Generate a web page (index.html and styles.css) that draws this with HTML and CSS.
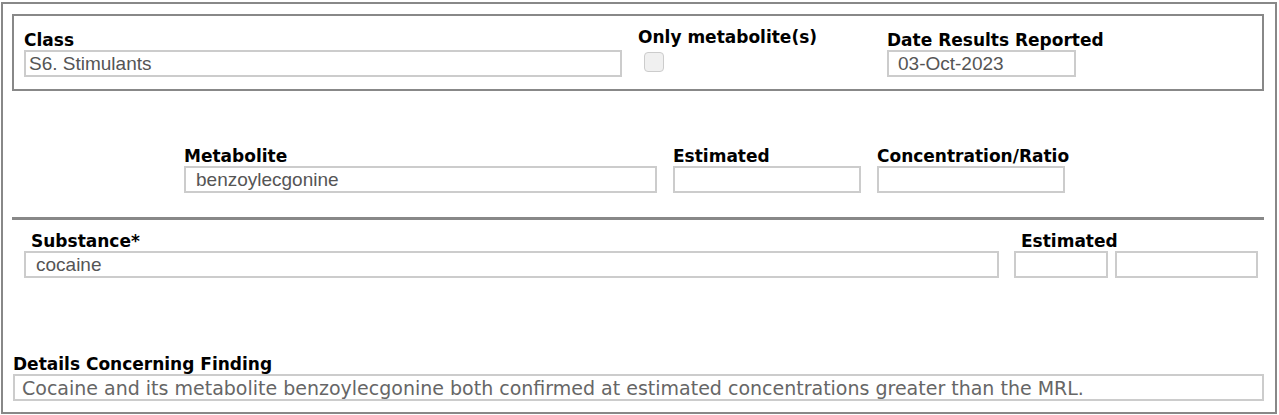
FILE: index.html
```html
<!DOCTYPE html>
<html lang="en">
  <head>
    <meta charset="UTF-8" />
    <meta name="viewport" content="width=device-width, initial-scale=1.0" />
    <title>Finding</title>
    <link rel="stylesheet" href="styles.css">
  </head>
  <body>
    <div class="panel">
      <div class="summary">
        <div class="field class-field">
          <label>Class</label>
          <input class="box" type="text" value="S6. Stimulants" readonly />
        </div>
        <div class="field only-field">
          <label>Only metabolite(s)</label>
          <span class="check"></span>
        </div>
        <div class="field date-field">
          <label>Date Results Reported</label>
          <input class="box date-pad" type="text" value="03-Oct-2023" readonly />
        </div>
      </div>

      <div class="row metabolite-row">
        <div class="field metabolite-field">
          <label>Metabolite</label>
          <input class="box wide-pad" type="text" value="benzoylecgonine" readonly />
        </div>
        <div class="field small-field">
          <label>Estimated</label>
          <input class="box" type="text" value="" readonly />
        </div>
        <div class="field small-field">
          <label>Concentration/Ratio</label>
          <input class="box" type="text" value="" readonly />
        </div>
      </div>

      <hr class="divider" />

      <div class="row substance-row">
        <div class="field substance-field">
          <label class="indent">Substance*</label>
          <input class="box wide-pad" type="text" value="cocaine" readonly />
        </div>
        <div class="field estimated-field">
          <label class="indent">Estimated</label>
          <div class="pair">
            <input class="box est-a" type="text" value="" readonly />
            <input class="box est-b" type="text" value="" readonly />
          </div>
        </div>
      </div>

      <div class="field details-field">
        <label>Details Concerning Finding</label>
        <input class="box details" type="text" value="Cocaine and its metabolite benzoylecgonine both confirmed at estimated concentrations greater than the MRL." readonly />
      </div>
    </div>
  </body>
</html>
```

FILE: styles.css
```css
* {
  box-sizing: border-box;
}

body {
  margin: 0;
  background: #fff;
  font-family: 'DejaVu Sans', Verdana, sans-serif;
}

.panel {
  margin: 2px 2px 0 1px;
  height: 412px;
  border: 2px solid #888;
}

.field {
  display: flex;
  flex-direction: column;
}

.field label {
  font-size: 17px;
  font-weight: bold;
  line-height: 18px;
  color: #000;
  margin-bottom: 1px;
  white-space: nowrap;
}

.box {
  height: 27px;
  border: 2px solid #ccc;
  padding: 0 0 0 3px;
  margin: 0;
  font-family: 'Liberation Sans', Arial, sans-serif;
  font-size: 19px;
  color: #555;
  background: #fff;
  outline: none;
}

.summary {
  display: flex;
  margin: 10px 0 0 9px;
  width: 1252px;
  height: 77px;
  border: 2px solid #888;
  padding: 15px 0 0 10px;
}

.class-field {
  width: 598px;
}

.only-field {
  margin-left: 16px;
  margin-top: -3px;
  width: 249px;
}

.only-field .check {
  display: block;
  width: 20px;
  height: 20px;
  margin: 5px 0 0 6px;
  border: 1px solid #ccc;
  border-radius: 4px;
  background: #f0f0f0;
}

.date-field {
  width: 189px;
}

.date-pad {
  padding-left: 9px;
}

.row {
  display: flex;
}

.metabolite-row {
  margin: 56px 0 0 181px;
  gap: 16px;
}

.metabolite-field {
  width: 473px;
}

.wide-pad {
  padding-left: 10px;
}

.small-field {
  width: 188px;
}

.divider {
  margin: 24px 0 0 9px;
  width: 1252px;
  height: 3px;
  border: none;
  background: #888;
}

.substance-row {
  margin: 12px 0 0 21px;
}

.indent {
  padding-left: 7px;
}

.substance-field {
  width: 975px;
}

.estimated-field {
  margin-left: 15px;
}

.pair {
  display: flex;
  gap: 7px;
}

.est-a {
  width: 94px;
}

.est-b {
  width: 143px;
}

.details-field {
  margin: 77px 0 0 10px;
  width: 1251px;
}

.details {
  width: 1251px;
  padding-left: 7px;
  font-family: 'DejaVu Sans', Verdana, sans-serif;
  font-size: 19px;
  color: #666;
}
```
